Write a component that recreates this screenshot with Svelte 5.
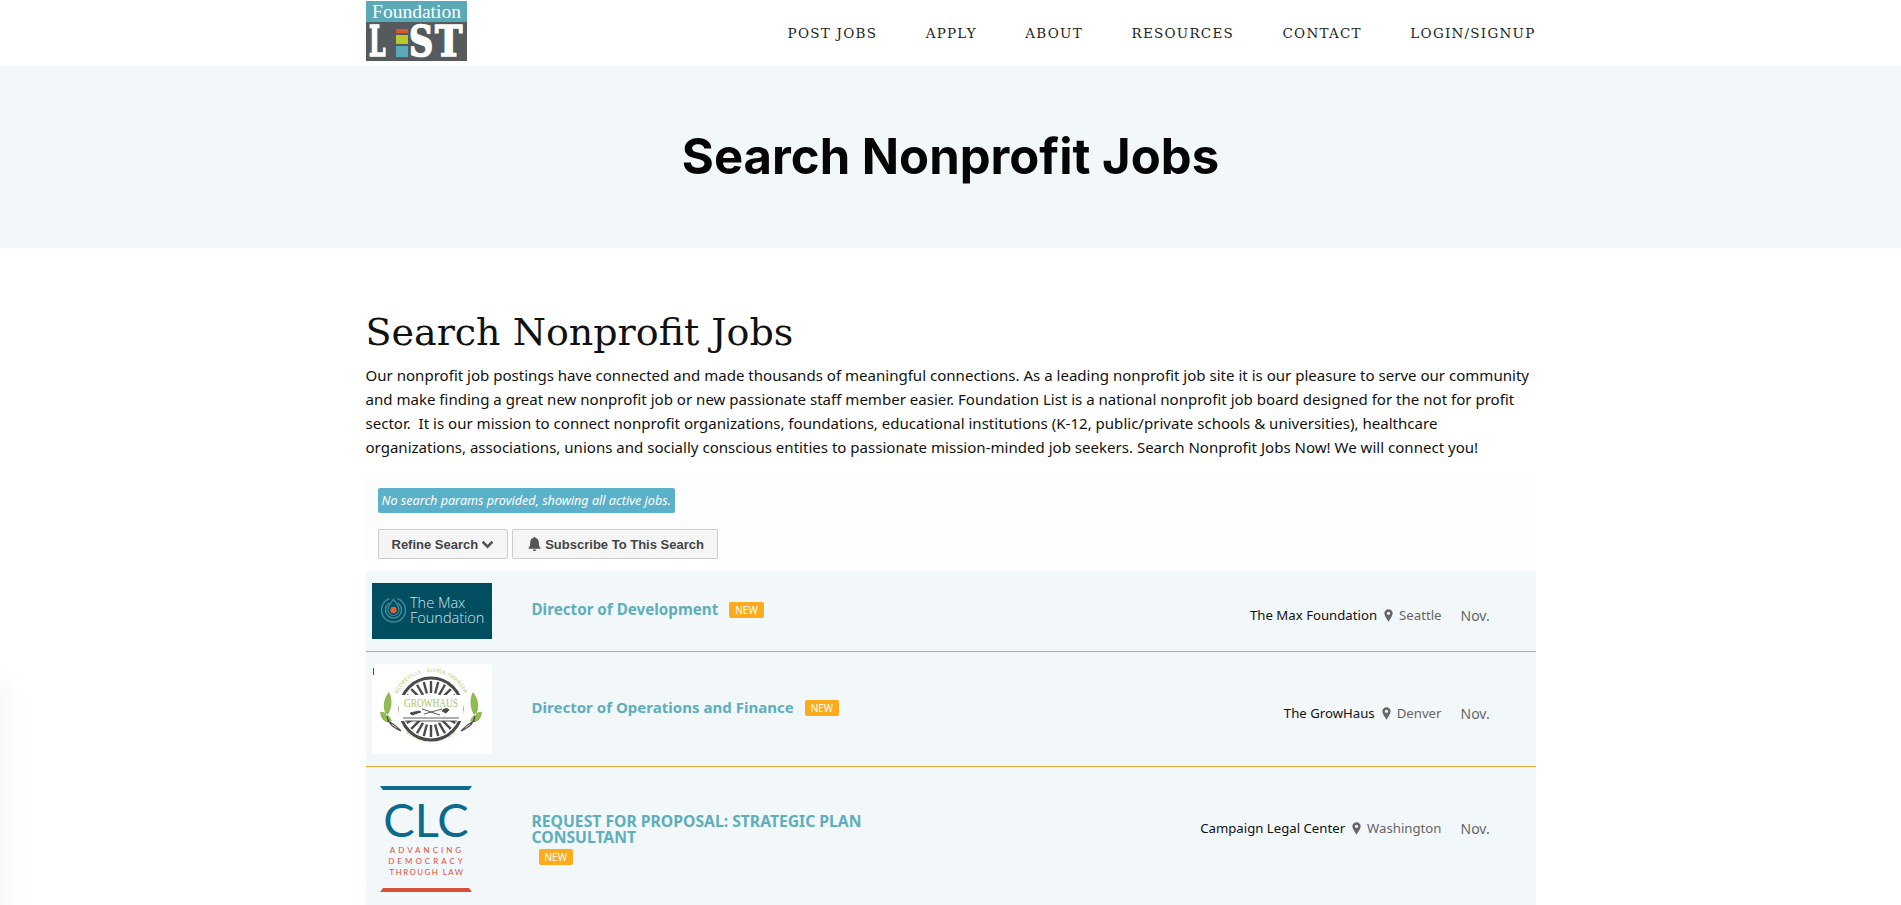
<script>
  const nav = ['POST JOBS', 'APPLY', 'ABOUT', 'RESOURCES', 'CONTACT', 'LOGIN/SIGNUP'];
  const rays = Array.from({ length: 24 }, (_, i) => i * 15);
  const jobs = [
    { id: 'max', title: 'Director of Development', org: 'The Max Foundation', city: 'Seattle' },
    { id: 'grow', title: 'Director of Operations and Finance', org: 'The GrowHaus', city: 'Denver' },
    { id: 'clc', title: 'REQUEST FOR PROPOSAL: STRATEGIC PLAN CONSULTANT', org: 'Campaign Legal Center', city: 'Washington' }
  ];
</script>

<div class="page">
  <div class="smudge"></div>
  <header>
    <div class="wrap head">
      <svg class="logo" viewBox="0 0 101 60" aria-label="Foundation List">
        <rect width="101" height="21" fill="#5aa9b6" />
        <rect y="21" width="101" height="39" fill="#555a5c" />
        <text x="50.500" y="16.500" class="lf" text-anchor="middle">Foundation</text>
        <text transform="translate(3 55) scale(.56 1)" class="ll">L</text>
        <text transform="translate(43 55) scale(.8 1)" class="ll">S</text>
        <text transform="translate(69 55) scale(.875 1)" class="ll">T</text>
        <rect x="30" y="28" width="12" height="4" fill="#d9582b" />
        <rect x="30" y="34" width="12" height="9" fill="#b8c92c" />
        <rect x="30" y="45" width="12" height="11" fill="#5aa9b6" />
      </svg>
      <nav>
        {#each nav as item}<a href="#top">{item}</a>{/each}
      </nav>
    </div>
  </header>

  <section class="hero"><h1>Search Nonprofit Jobs</h1></section>

  <main class="wrap">
    <h2>Search Nonprofit Jobs</h2>
    <p class="intro">Our nonprofit job postings have connected and made thousands of meaningful connections. As a leading nonprofit job site it is our pleasure to serve our community and make finding a great new nonprofit job or new passionate staff member easier. Foundation List is a national nonprofit job board designed for the not for profit sector.&nbsp; It is our mission to connect nonprofit organizations, foundations, educational institutions (K-12, public/private schools &amp; universities), healthcare organizations, associations, unions and socially conscious entities to passionate mission-minded job seekers. Search Nonprofit Jobs Now! We will connect you!</p>

    <div class="search">
      <div class="alert">No search params provided, showing all active jobs.</div>
      <div class="btns">
        <button class="refine">Refine Search
          <svg viewBox="0 0 12 8" class="chev"><path d="M1.500 1.500 6 6l4.500-4.500" fill="none" stroke="#555" stroke-width="2.400" /></svg>
        </button>
        <button class="sub">
          <svg viewBox="0 0 12 13" class="bell"><path d="M6 0c.6 0 1 .4 1 1 2 .4 3 2 3 4 0 3 .6 4 1.600 5.200V11H.4v-.8C1.400 9 2 8 2 5c0-2 1-3.600 3-4 0-.6.4-1 1-1zM4.500 11.500h3C7.500 12.400 6.800 13 6 13s-1.500-.6-1.500-1.500z" fill="#555" /></svg>
          Subscribe To This Search
        </button>
      </div>
    </div>

    <div class="list">
      {#each jobs as job}
        <article class="row {job.id}">
          <div class="thumb">
            {#if job.id === 'max'}
              <svg viewBox="0 0 120 56" class="img-max">
                <rect width="120" height="56" fill="#014e60" />
                <circle cx="21.500" cy="27" r="12" fill="none" stroke="#3f8b9b" stroke-width="1.400" />
                <circle cx="21.500" cy="27" r="8" fill="none" stroke="#3f8b9b" stroke-width="1.400" />
                <path d="M17 12c1 3 1 5-1 8h11c-2-3-2-5-1-8z" fill="#014e60" />
                <path d="M21.500 16c.5 2 5.500 6 5.500 11a5.500 5.500 0 0 1-11 0c0-5 5-9 5.500-11z" fill="none" stroke="#3f8b9b" stroke-width="1.200" />
                <circle cx="21.500" cy="27" r="3.200" fill="#e0603a" />
                <text x="38" y="25" class="mx">The Max</text>
                <text x="38" y="40" class="mx">Foundation</text>
              </svg>
            {:else if job.id === 'grow'}
              <svg viewBox="0 0 120 90" class="img-grow">
                <rect width="120" height="90" fill="#fff" />
                <rect x="1" y="4" width="1" height="7" fill="#555" />
                <defs>
                  <path id="arcTop" d="M22 45a37 37 0 0 1 74 0" />
                  <path id="arcBot" d="M26 58a37 37 0 0 0 66 0" />
                </defs>
                <text class="arc"><textPath href="#arcTop" startOffset="50%" text-anchor="middle">GLOBEVILLE · ELYRIA-SWANSEA</textPath></text>
                <text class="arc"><textPath href="#arcBot" startOffset="50%" text-anchor="middle">DENVER, COLORADO</textPath></text>
                <circle cx="59" cy="45" r="31" fill="#fff" stroke="#4a4a4a" stroke-width="3" />
                {#each rays as a}
                  {#if a < 65 || a > 295 || (a > 115 && a < 245)}
                    <rect x="57.800" y="17" width="2.400" height="12" fill="#4a4a4a" transform="rotate({a} 59 45)" />
                  {/if}
                {/each}
                <rect x="27" y="31" width="64" height="26" fill="#fff" />
                <text x="59" y="43" class="gh" text-anchor="middle" textLength="54" lengthAdjust="spacingAndGlyphs">GROWHAUS</text>
                <path d="M38 49l9-2 2 1-9 3zM70 47c2-3 6-3 7-1l-3 3zM50 45l18 6M52 50l18-5M31 54h56M33 57h52" stroke="#4a4a4a" stroke-width=".9" fill="#4a4a4a" />
                <path d="M17 28c-6 7-7 17-2 24 5-6 6-17 2-24zM101 28c6 7 7 17 2 24-5-6-6-17-2-24zM8 48c3-1 9 2 12 9-5 3-11 0-12-9zM110 48c-3-1-9 2-12 9 5 3 11 0 12-9z" fill="#8fbb52" />
                <path d="M15 52c1 7 5 11 14 15M103 52c-1 7-5 11-14 15M15 57c5 1 9 5 14 10M103 57c-5 1-9 5-14 10" stroke="#4a4a4a" stroke-width="1.200" fill="none" />
              </svg>
            {:else}
              <svg viewBox="0 0 120 120" class="img-clc">
                <path d="M8 7h92l-3 4H11z" fill="#0c6a8a" />
                <text x="54" y="58" class="cl" text-anchor="middle">CLC</text>
                <text x="55" y="74" class="cs" text-anchor="middle">ADVANCING</text>
                <text x="55" y="85" class="cs" text-anchor="middle">DEMOCRACY</text>
                <text x="55" y="96" class="cs csb" text-anchor="middle">THROUGH LAW</text>
                <path d="M11 109h86l3 4H8z" fill="#d9503a" />
              </svg>
            {/if}
          </div>
          <div class="title">
            <a href="#top">{job.title}</a>
            <span class="badge">NEW</span>
          </div>
          <div class="meta">
            <span class="org">{job.org}</span>
            <svg viewBox="0 0 10 14" class="pin"><path fill-rule="evenodd" d="M5 0a4.600 4.600 0 0 1 4.600 4.600C9.600 7.500 6.500 11.500 5 14 3.500 11.500.4 7.500.4 4.600A4.600 4.600 0 0 1 5 0zm0 2.700a1.900 1.900 0 1 0 0 3.800 1.900 1.900 0 0 0 0-3.800z" fill="#666" /></svg>
            <span class="city">{job.city}</span>
            <span class="date">Nov.</span>
          </div>
        </article>
      {/each}
    </div>
  </main>
</div>

<style>
  :global(body) { margin: 0; background: #fff; }
  .page { height: 905px; overflow: hidden; position: relative; font-family: "Noto Sans", sans-serif; color: #111; }
  .smudge { position: absolute; left: -30px; top: 680px; width: 36px; height: 300px; background: #f4f4f4; filter: blur(12px); }
  .wrap { width: 1170px; margin: 0 auto; }
  header { height: 66px; }
  .head { display: flex; justify-content: space-between; align-items: center; height: 66px; }
  .logo { width: 101px; height: 60px; display: block; margin-top: -4px; overflow: visible; }
  .lf { font: 19.500px "Liberation Serif", serif; fill: #fff; }
  .ll { font: 700 42px "DejaVu Serif", serif; fill: #fff; stroke: #fff; stroke-width: 1.600px; }
  nav { display: flex; gap: 48.500px; }
  nav a { font: 13.500px "DejaVu Serif", serif; letter-spacing: 1.250px; color: #222; text-decoration: none; }
  .hero { height: 182px; background: #f2f7f9; display: flex; align-items: center; justify-content: center; }
  h1 { margin: -2px 0 0; font: 700 49px Inter, sans-serif; color: #050505; }
  h2 { margin: 0; padding-top: 60px; font: 400 38px/48px "DejaVu Serif", serif; color: #111; }
  .intro { margin: 7px 0 0; font-size: 15.060px; line-height: 24px; color: #111; }
  .search { margin-top: 15px; height: 85px; background: #fdfdfd; padding: 14px 12px 0; box-sizing: border-box; }
  .alert { display: inline-block; height: 25px; line-height: 25px; padding: 0 4px; border-radius: 2px; background: #5bb1c9; color: #fff; font-size: 12.600px; font-style: italic; vertical-align: top; }
  .btns { display: flex; gap: 4px; margin-top: 16px; }
  button { height: 30px; box-sizing: border-box; padding: 0 13px; border: 1px solid #ccc; border-radius: 2px; background: #f5f5f5; color: #444; font: 700 13px "Liberation Sans", sans-serif; display: flex; align-items: center; gap: 3px; }
  .sub { gap: 4px; padding-left: 15px; }
  .chev { width: 13px; height: 9px; }
  .bell { width: 13px; height: 14px; }
  .list { margin-top: 12px; }
  .row { display: flex; align-items: center; background: #f2f7fa; padding: 12px 6px; border-bottom: 1px solid #eaa62f; }
  .thumb { width: 120px; flex: none; }
  .thumb svg { display: block; width: 120px; }
  .img-max { height: 56px; }
  .img-grow { height: 90px; }
  .img-clc { height: 120px; }
  .mx { font: 300 14.500px "Open Sans", sans-serif; fill: #cfe3e6; }
  .arc { font: 5px "Noto Sans", sans-serif; fill: #a9c76f; letter-spacing: .4px; }
  .gh { font: 12.500px "Liberation Serif", serif; fill: #a6c466; }
  .cl { font: 400 47px Lato, sans-serif; fill: #0c6a8a; }
  .cs { font: 400 8px Lato, sans-serif; fill: #d9503a; letter-spacing: 3px; }
  .csb { letter-spacing: 1.400px; }
  .title { width: 340px; margin: -4px 0 0 40px; flex: none; line-height: 16px; font-size: 15.200px; font-weight: 700; }
  .title a { color: #5eaebb; text-decoration: none; }
  .badge { display: inline-block; margin-left: 7px; padding: 0 6px; height: 16px; line-height: 16px; border-radius: 2px; background: #fdab1c; color: #fff; font-size: 10px; font-weight: 400; vertical-align: 1px; }
  .grow .title { font-size: 15.050px; }
  .clc .title { margin-top: 0; font-size: 15.700px; }
  .clc .title a { display: block; }
  .clc .badge { margin-top: 4px; vertical-align: top; }
  .meta { flex: 1; margin-top: 8px; display: flex; justify-content: flex-end; align-items: center; font-size: 13.200px; }
  .clc .meta { margin-top: -22px; }
  .org { color: #111; }
  .pin { width: 9px; height: 13px; margin: 0 6px 0 7px; }
  .city { color: #666; }
  .date { width: 69px; margin-left: 19px; font-size: 14px; color: #666; }
</style>
